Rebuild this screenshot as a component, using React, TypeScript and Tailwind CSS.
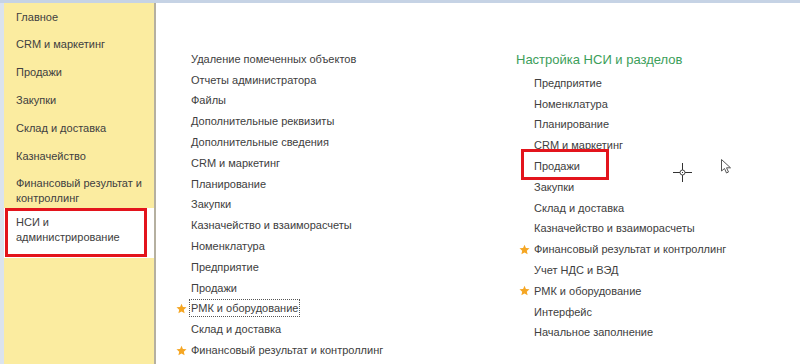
import React from "react";

const sideItems: { label: string[]; selected?: boolean }[] = [
  { label: ["Главное"] },
  { label: ["CRM и маркетинг"] },
  { label: ["Продажи"] },
  { label: ["Закупки"] },
  { label: ["Склад и доставка"] },
  { label: ["Казначейство"] },
  { label: ["Финансовый результат и", "контроллинг"] },
  { label: ["НСИ и", "администрирование"], selected: true },
];

const midItems: { t: string; star?: boolean; focus?: boolean }[] = [
  { t: "Удаление помеченных объектов" },
  { t: "Отчеты администратора" },
  { t: "Файлы" },
  { t: "Дополнительные реквизиты" },
  { t: "Дополнительные сведения" },
  { t: "CRM и маркетинг" },
  { t: "Планирование" },
  { t: "Закупки" },
  { t: "Казначейство и взаиморасчеты" },
  { t: "Номенклатура" },
  { t: "Предприятие" },
  { t: "Продажи" },
  { t: "РМК и оборудование", star: true, focus: true },
  { t: "Склад и доставка" },
  { t: "Финансовый результат и контроллинг", star: true },
];

const rightItems: { t: string; star?: boolean; boxed?: boolean }[] = [
  { t: "Предприятие" },
  { t: "Номенклатура" },
  { t: "Планирование" },
  { t: "CRM и маркетинг" },
  { t: "Продажи", boxed: true },
  { t: "Закупки" },
  { t: "Склад и доставка" },
  { t: "Казначейство и взаиморасчеты" },
  { t: "Финансовый результат и контроллинг", star: true },
  { t: "Учет НДС и ВЭД" },
  { t: "РМК и оборудование", star: true },
  { t: "Интерфейс" },
  { t: "Начальное заполнение" },
];

function Star() {
  return (
    <svg width="11" height="11" viewBox="0 0 24 24">
      <path
        d="M12 1.5l3.1 7.2 7.8.7-5.9 5.2 1.8 7.7L12 18.3l-6.8 4 1.8-7.7-5.9-5.2 7.8-.7z"
        fill="#f5a623"
      />
    </svg>
  );
}

function Row({ t, star, focus, boxed }: { t: string; star?: boolean; focus?: boolean; boxed?: boolean }) {
  return (
    <div className="flex h-[20.8px] items-center">
      <div className="flex w-[20px] justify-end pr-[4px]">{star ? <Star /> : null}</div>
      <div className="relative">
        <span
          className={
            focus
              ? "border border-dotted border-[#555] px-[1px] py-[2px] -ml-[2px]"
              : ""
          }
        >
          {t}
        </span>
        {boxed ? (
          <div className="absolute left-[-13px] top-[-9px] h-[31px] w-[88px] border-[3px] border-[#e3141c]" />
        ) : null}
      </div>
    </div>
  );
}

export default function App() {
  return (
    <div
      className="relative flex h-[364px] w-[800px] flex-col overflow-hidden bg-white text-[11px] text-[#404040]"
      style={{ fontFamily: '"Liberation Sans", Arial, sans-serif' }}
    >
      <div className="h-[3px] bg-[#c6d3e5]" />
      <div className="flex flex-1">
        <div className="w-[4px] bg-[#dbe3ee]" />
        <div className="flex w-[150px] flex-col bg-[#fbeca0]">
          {sideItems.map((it, i) =>
            it.selected ? (
              <div key={i} className="relative bg-white pl-[12px] pt-[7px] pb-[13px] leading-[15px]">
                {it.label.map((l) => (
                  <div key={l}>{l}</div>
                ))}
                <div className="absolute left-[1px] top-[0px] h-[49px] w-[142px] border-[3px] border-[#e3141c]" />
              </div>
            ) : it.label.length > 1 ? (
              <div key={i} className="pl-[12px] pt-[6px] pb-[2px] leading-[15px]">
                {it.label.map((l) => (
                  <div key={l}>{l}</div>
                ))}
              </div>
            ) : (
              <div key={i} className="flex h-[27.8px] items-center pl-[12px]">
                {it.label[0]}
              </div>
            )
          )}
        </div>
        <div className="w-[2px] bg-[#b5b0a0]" />
        <div className="flex flex-1 pl-[15px] pt-[45.6px]">
          <div className="w-[343px]">
            {midItems.map((m) => (
              <Row key={m.t} {...m} />
            ))}
          </div>
          <div className="flex flex-col">
            <div className="h-[21px] pl-[2px] text-[13px] leading-[21px] text-[#3c9e5a]">
              Настройка НСИ и разделов
            </div>
            <div className="pt-[3px]">
              {rightItems.map((m) => (
                <Row key={m.t} {...m} />
              ))}
            </div>
          </div>
        </div>
      </div>

      <svg className="absolute left-[672px] top-[162px]" width="21" height="21" viewBox="0 0 21 21">
        <line x1="10.5" y1="1" x2="10.5" y2="20" stroke="#333" strokeWidth="1" />
        <line x1="1" y1="10.5" x2="20" y2="10.5" stroke="#333" strokeWidth="1" />
        <circle cx="10.5" cy="10.5" r="2.5" fill="white" stroke="#444" strokeWidth="1" />
        <rect x="10" y="10" width="1" height="1" fill="#333" />
      </svg>
      <svg className="absolute left-[720px] top-[158px]" width="12" height="18" viewBox="0 0 12 18">
        <path d="M1.5 1.5 L1.5 13 L4.5 10.5 L6.5 15 L8.5 14 L6.5 9.8 L10.5 9.8 Z" fill="white" stroke="#555" strokeWidth="1" />
      </svg>
    </div>
  );
}
